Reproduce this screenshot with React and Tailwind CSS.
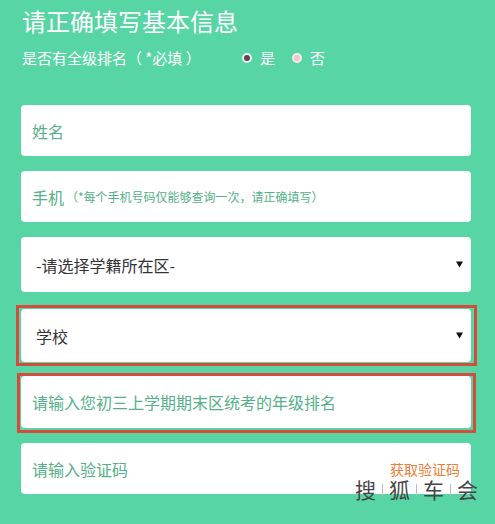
import React from "react";

function Arrow() {
  return (
    <svg width="7" height="7" viewBox="0 0 7 7" className="shrink-0">
      <path d="M0 0.5 H7 L3.5 6.5 Z" fill="#111" />
    </svg>
  );
}

function Radio({ checked }) {
  if (checked) {
    return (
      <span className="flex h-[10px] w-[10px] shrink-0 items-center justify-center rounded-full bg-[#eef0ee]">
        <span className="h-[6px] w-[6px] rounded-full bg-[#5e4651]" />
      </span>
    );
  }
  return (
    <span className="flex h-[10px] w-[10px] shrink-0 items-center justify-center rounded-full bg-[#f7e9ec]">
      <span className="h-[6px] w-[6px] rounded-full bg-[#f2c4cf]" />
    </span>
  );
}

export default function App() {
  return (
    <div className="relative min-h-[524px] bg-[#58d5a5] pl-[21px] pr-[24px] pt-[9px] font-['Noto_Sans_CJK_SC',sans-serif]">
      <h1 className="pl-[1px] text-[24px] leading-[24px] text-white">请正确填写基本信息</h1>

      <div className="mt-[17px] flex h-[16px] items-center text-[15px] leading-[16px] text-white">
        <span className="w-[221px] pl-[1px]">是否有全级排名（ *必填 ）</span>
        <Radio checked />
        <span className="ml-[8px]">是</span>
        <span className="ml-[17px]">
          <Radio />
        </span>
        <span className="ml-[8px]">否</span>
      </div>

      <div className="mt-[39px] flex h-[51px] items-center rounded-[4px] bg-white pl-[11px] text-[16px] text-[#53b088]">
        姓名
      </div>

      <div className="mt-[15px] flex h-[51px] items-center rounded-[4px] bg-white pl-[11px] text-[#53b088]">
        <span className="text-[16px]">手机</span>
        <span className="ml-[2px] text-[12px]">（*每个手机号码仅能够查询一次，请正确填写）</span>
      </div>

      <div className="mt-[15px] flex h-[55px] items-center justify-between rounded-[4px] bg-white pl-[15px] pr-[8px] text-[16px] text-[#333]">
        <span>-请选择学籍所在区-</span>
        <Arrow />
      </div>

      <div className="-ml-[5px] -mr-[6px] mt-[13px] border-[3px] border-[#d44c3c] pb-[1px] pl-[2px] pr-[3px] pt-[1px]">
        <div className="flex h-[53px] items-center justify-between rounded-[4px] bg-white pl-[15px] pr-[8px] text-[16px] text-[#333]">
          <span>学校</span>
          <Arrow />
        </div>
      </div>

      <div className="-ml-[4px] -mr-[5px] mt-[7px] border-[3px] border-[#d44c3c] pb-[2px] pl-[1px] pr-[2px]">
        <div className="flex h-[52px] items-center rounded-[4px] bg-white pl-[11px] text-[16px] text-[#53b088]">
          请输入您初三上学期期末区统考的年级排名
        </div>
      </div>

      <div className="mt-[10px] flex h-[51px] items-center justify-between rounded-[4px] bg-white pl-[11px] pr-[11px]">
        <span className="text-[16px] text-[#53b088]">请输入验证码</span>
        <span className="text-[14px] leading-[16px] text-[#ec7d35]">获取验证码</span>
      </div>

      <div className="absolute left-[355px] top-[479px] flex items-center text-[21px] leading-[21px] text-[#444]">
        <span>搜</span>
        <span className="mx-[6px] h-[12px] w-px bg-[#bbb]" />
        <span>狐</span>
        <span className="mx-[6px] h-[12px] w-px bg-[#bbb]" />
        <span>车</span>
        <span className="mx-[6px] h-[12px] w-px bg-[#bbb]" />
        <span>会</span>
      </div>
    </div>
  );
}
